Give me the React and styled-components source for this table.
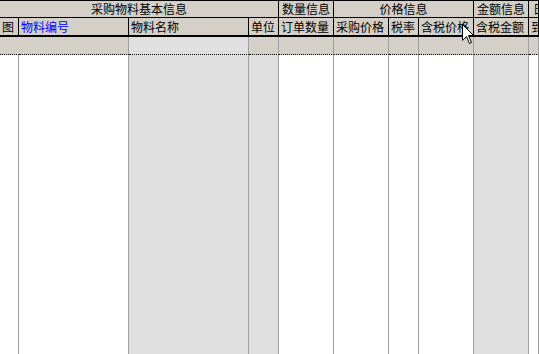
import styled, { createGlobalStyle } from "styled-components";

const GlobalStyle = createGlobalStyle`
  html, body {
    margin: 0;
    padding: 0;
    background: #fff;
    overflow: hidden;
  }
  body {
    font-family: "Noto Sans CJK SC", "Noto Sans", sans-serif;
    font-size: 12px;
  }
`;

const columns = [
  { key: "pic", title: "图", width: "19px", shade: false },
  { key: "code", title: "物料编号", width: "110px", shade: false, link: true },
  { key: "name", title: "物料名称", width: "120px", shade: true },
  { key: "unit", title: "单位", width: "30px", shade: true, filterShade: false },
  { key: "qty", title: "订单数量", width: "55px", shade: false },
  { key: "price", title: "采购价格", width: "55px", shade: false },
  { key: "tax", title: "税率", width: "30px", shade: false },
  { key: "taxPrice", title: "含税价格", width: "55px", shade: false },
  { key: "amount", title: "含税金额", width: "55px", shade: true, filterShade: false },
  { key: "date", title: "到货日期", width: "1fr", shade: false },
];

const groups = [
  { title: "采购物料基本信息", span: 4 },
  { title: "数量信息", span: 1 },
  { title: "价格信息", span: 3 },
  { title: "金额信息", span: 1 },
  { title: "日期信息", span: 1, left: true },
];

export default function App() {
  return (
    <>
      <GlobalStyle />
      <Sheet $cols={columns.map((c) => c.width).join(" ")}>
        {groups.map((g) => (
          <GroupCell key={g.title} $span={g.span} $left={g.left}>
            {g.title}
          </GroupCell>
        ))}
        {columns.map((c) => (
          <HeadCell key={c.key} $link={c.link}>
            {c.title}
          </HeadCell>
        ))}
        {columns.map((c, i) => (
          <FilterCell
            key={c.key}
            $shade={c.shade && c.filterShade !== false}
            $first={i === 0}
          />
        ))}
        {columns.map((c) => (
          <BodyCell key={c.key} $shade={c.shade} />
        ))}
      </Sheet>
      <Cursor viewBox="0 0 12 20" width="12" height="20">
        <path
          d="M0.5 0.5 L0.5 16.5 L4.5 12.5 L7.5 19.5 L9.5 18.5 L6.5 11.5 L11.5 11.5 Z"
          fill="#fff"
          stroke="#000"
          strokeWidth="1"
        />
      </Cursor>
    </>
  );
}

const Sheet = styled.div`
  display: grid;
  grid-template-columns: ${(p) => p.$cols};
  grid-template-rows: 17px 19px 18px 1fr;
  width: 539px;
  height: 354px;
  border-top: 1px solid #000;
  overflow: hidden;
`;

const headBase = `
  display: flex;
  align-items: center;
  box-sizing: border-box;
  background: #d4d0c8;
  color: #000;
  white-space: nowrap;
  overflow: hidden;
  border-right: 1px solid #000;
  border-bottom: 1px solid #000;
  line-height: 1;
`;

const GroupCell = styled.div`
  ${headBase}
  grid-column: span ${(p) => p.$span};
  justify-content: ${(p) => (p.$left ? "flex-start" : "center")};
  padding-left: ${(p) => (p.$left ? "4px" : "0")};
`;

const HeadCell = styled.div`
  ${headBase}
  padding-left: 2px;
  border-bottom-width: 2px;
  color: ${(p) => (p.$link ? "#0000ff" : "#000")};
`;

const FilterCell = styled.div`
  box-sizing: border-box;
  background: ${(p) => (p.$shade ? "#e0e0e0" : "#d4d0c8")};
  border-right: 1px solid ${(p) => (p.$first ? "transparent" : "#a0a0a0")};
  border-bottom: 1px dotted #000;
`;

const BodyCell = styled.div`
  box-sizing: border-box;
  background: ${(p) => (p.$shade ? "#dfdfdf" : "#fff")};
  border-right: 1px solid #a0a0a0;
`;

const Cursor = styled.svg`
  position: absolute;
  left: 462px;
  top: 24px;
  display: block;
`;
